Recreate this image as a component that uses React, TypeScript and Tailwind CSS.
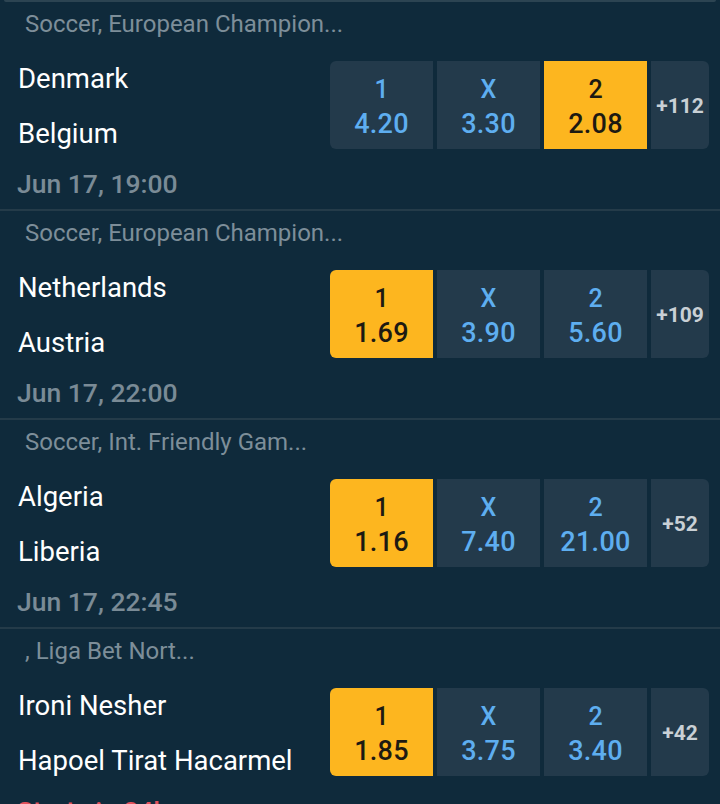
import React from "react";

type Match = {
  league: string;
  home: string;
  away: string;
  date: string;
  odds: [string, string, string];
  selected: number;
  more: string;
  dateRed?: boolean;
};

const matches: Match[] = [
  { league: "Soccer, European Champion...", home: "Denmark", away: "Belgium", date: "Jun 17, 19:00", odds: ["4.20", "3.30", "2.08"], selected: 2, more: "+112" },
  { league: "Soccer, European Champion...", home: "Netherlands", away: "Austria", date: "Jun 17, 22:00", odds: ["1.69", "3.90", "5.60"], selected: 0, more: "+109" },
  { league: "Soccer, Int. Friendly Gam...", home: "Algeria", away: "Liberia", date: "Jun 17, 22:45", odds: ["1.16", "7.40", "21.00"], selected: 0, more: "+52" },
  { league: ", Liga Bet Nort...", home: "Ironi Nesher", away: "Hapoel Tirat Hacarmel", date: "Starts in 24h", odds: ["1.85", "3.75", "3.40"], selected: 0, more: "+42", dateRed: true },
];

const labels = ["1", "X", "2"];

function OddButton({ label, value, active }: { label: string; value: string; active: boolean }) {
  return (
    <div
      className={
        "w-[103px] h-full flex flex-col items-center justify-center pt-[4px] " +
        (active ? "bg-[#fdb61f] text-[#1d1a12]" : "bg-[#233a4b] text-[#5eaef0]")
      }
    >
      <div className="h-[35px] flex items-center text-[25px] font-medium leading-none">{label}</div>
      <div className="h-[35px] flex items-center text-[27px] font-medium leading-none tracking-[0.3px]">{value}</div>
    </div>
  );
}

function MatchRow({ m, first }: { m: Match; first: boolean }) {
  return (
    <div className="flex flex-col">
      {first ? (
        <div className="h-[2px] mx-[4px] bg-[#2c4452] rounded-b-[2px]" />
      ) : (
        <div className="h-[2px] bg-[#243b49]" />
      )}
      <div className="h-[44px] flex items-center pl-[25px] text-[24px] text-[#7d8e99] leading-none">
        {m.league}
      </div>
      <div className="h-[4px]" />
      <div className="h-[110px] flex items-center">
        <div className="flex-1 flex flex-col pl-[18px] pt-[3px] text-white text-[27.5px] leading-none">
          <div className="h-[55px] flex items-center">{m.home}</div>
          <div className="h-[55px] flex items-center">{m.away}</div>
        </div>
        <div className="h-[88px] flex gap-[4px] mr-[11px] rounded-[6px] overflow-hidden">
          {m.odds.map((o, i) => (
            <OddButton key={i} label={labels[i]} value={o} active={m.selected === i} />
          ))}
          <div className="w-[58px] h-full bg-[#233a4b] flex items-center justify-center pt-[3px] text-[21px] font-bold text-[#c9d0d5]">
            {m.more}
          </div>
        </div>
      </div>
      <div
        className={
          "h-[49px] flex items-center pl-[17px] text-[26.5px] font-medium leading-none " +
          (m.dateRed ? "text-[#e2515c]" : "text-[#7a8b96]")
        }
      >
        {m.date}
      </div>
    </div>
  );
}

export default function App() {
  return (
    <div
      className="w-[720px] h-[804px] overflow-hidden bg-[#0f2a3b]"
      style={{ fontFamily: "Roboto, 'Liberation Sans', sans-serif" }}
    >
      {matches.map((m, i) => (
        <MatchRow key={i} m={m} first={i === 0} />
      ))}
    </div>
  );
}
